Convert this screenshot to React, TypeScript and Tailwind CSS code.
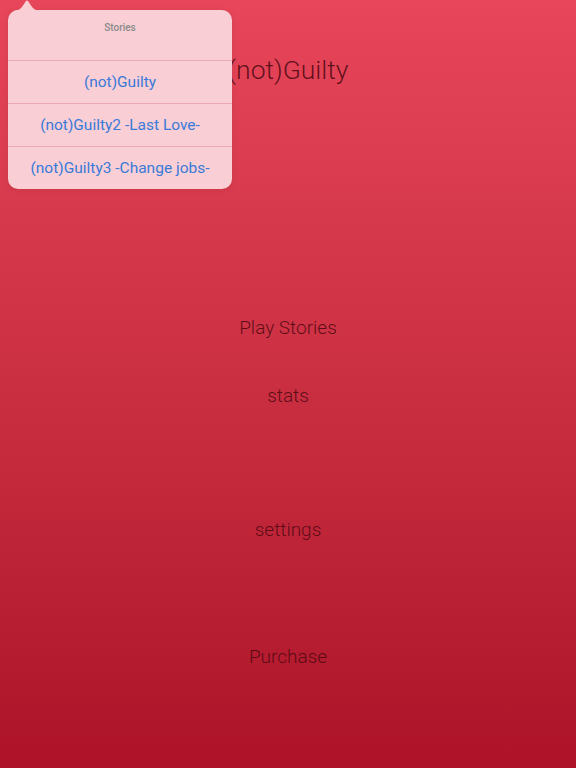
const stories = ["(not)Guilty", "(not)Guilty2 -Last Love-", "(not)Guilty3 -Change jobs-"];

const menu = [
  { label: "Play Stories", mt: "mt-[231px]" },
  { label: "stats", mt: "mt-[44px]" },
  { label: "settings", mt: "mt-[110px]" },
  { label: "Purchase", mt: "mt-[103px]" },
];

export default function App() {
  return (
    <div className="relative h-[768px] w-[576px] overflow-hidden bg-gradient-to-b from-[#e8465a] to-[#ad1228] font-['Roboto',sans-serif]">
      <div className="flex flex-col items-center pt-[54px]">
        <h1 className="text-[26.5px] font-light leading-[31px] text-[#4a0710]/85">(not)Guilty</h1>
        {menu.map((m) => (
          <button
            key={m.label}
            className={`${m.mt} text-[19px] font-light leading-[24px] text-[#4a0710]/85`}
          >
            {m.label}
          </button>
        ))}
      </div>

      {/* popover */}
      <div className="absolute left-[8px] top-0 w-[224px]">
        <svg className="absolute left-[4px] top-0" width="30" height="11" viewBox="0 0 30 11">
          <path d="M0 11 C6 11 9 9 12 4 L14 1 Q15 0 16 1 L18 4 C21 9 24 11 30 11 Z" fill="#f9cfd5" />
        </svg>
        <div className="mt-[10px] overflow-hidden rounded-[10px] bg-[#f9cfd5] shadow-[0_1px_6px_rgba(0,0,0,0.08)]">
          <div className="flex h-[50px] justify-center pt-[10px] text-[10px] font-medium text-[#8a8a8a]">Stories</div>
          {stories.map((s) => (
            <div
              key={s}
              className="flex h-[43px] items-center justify-center border-t border-[#e9a9b2] pt-[2px] text-[15.5px] text-[#3a7ad8]"
            >
              {s}
            </div>
          ))}
        </div>
      </div>
    </div>
  );
}
